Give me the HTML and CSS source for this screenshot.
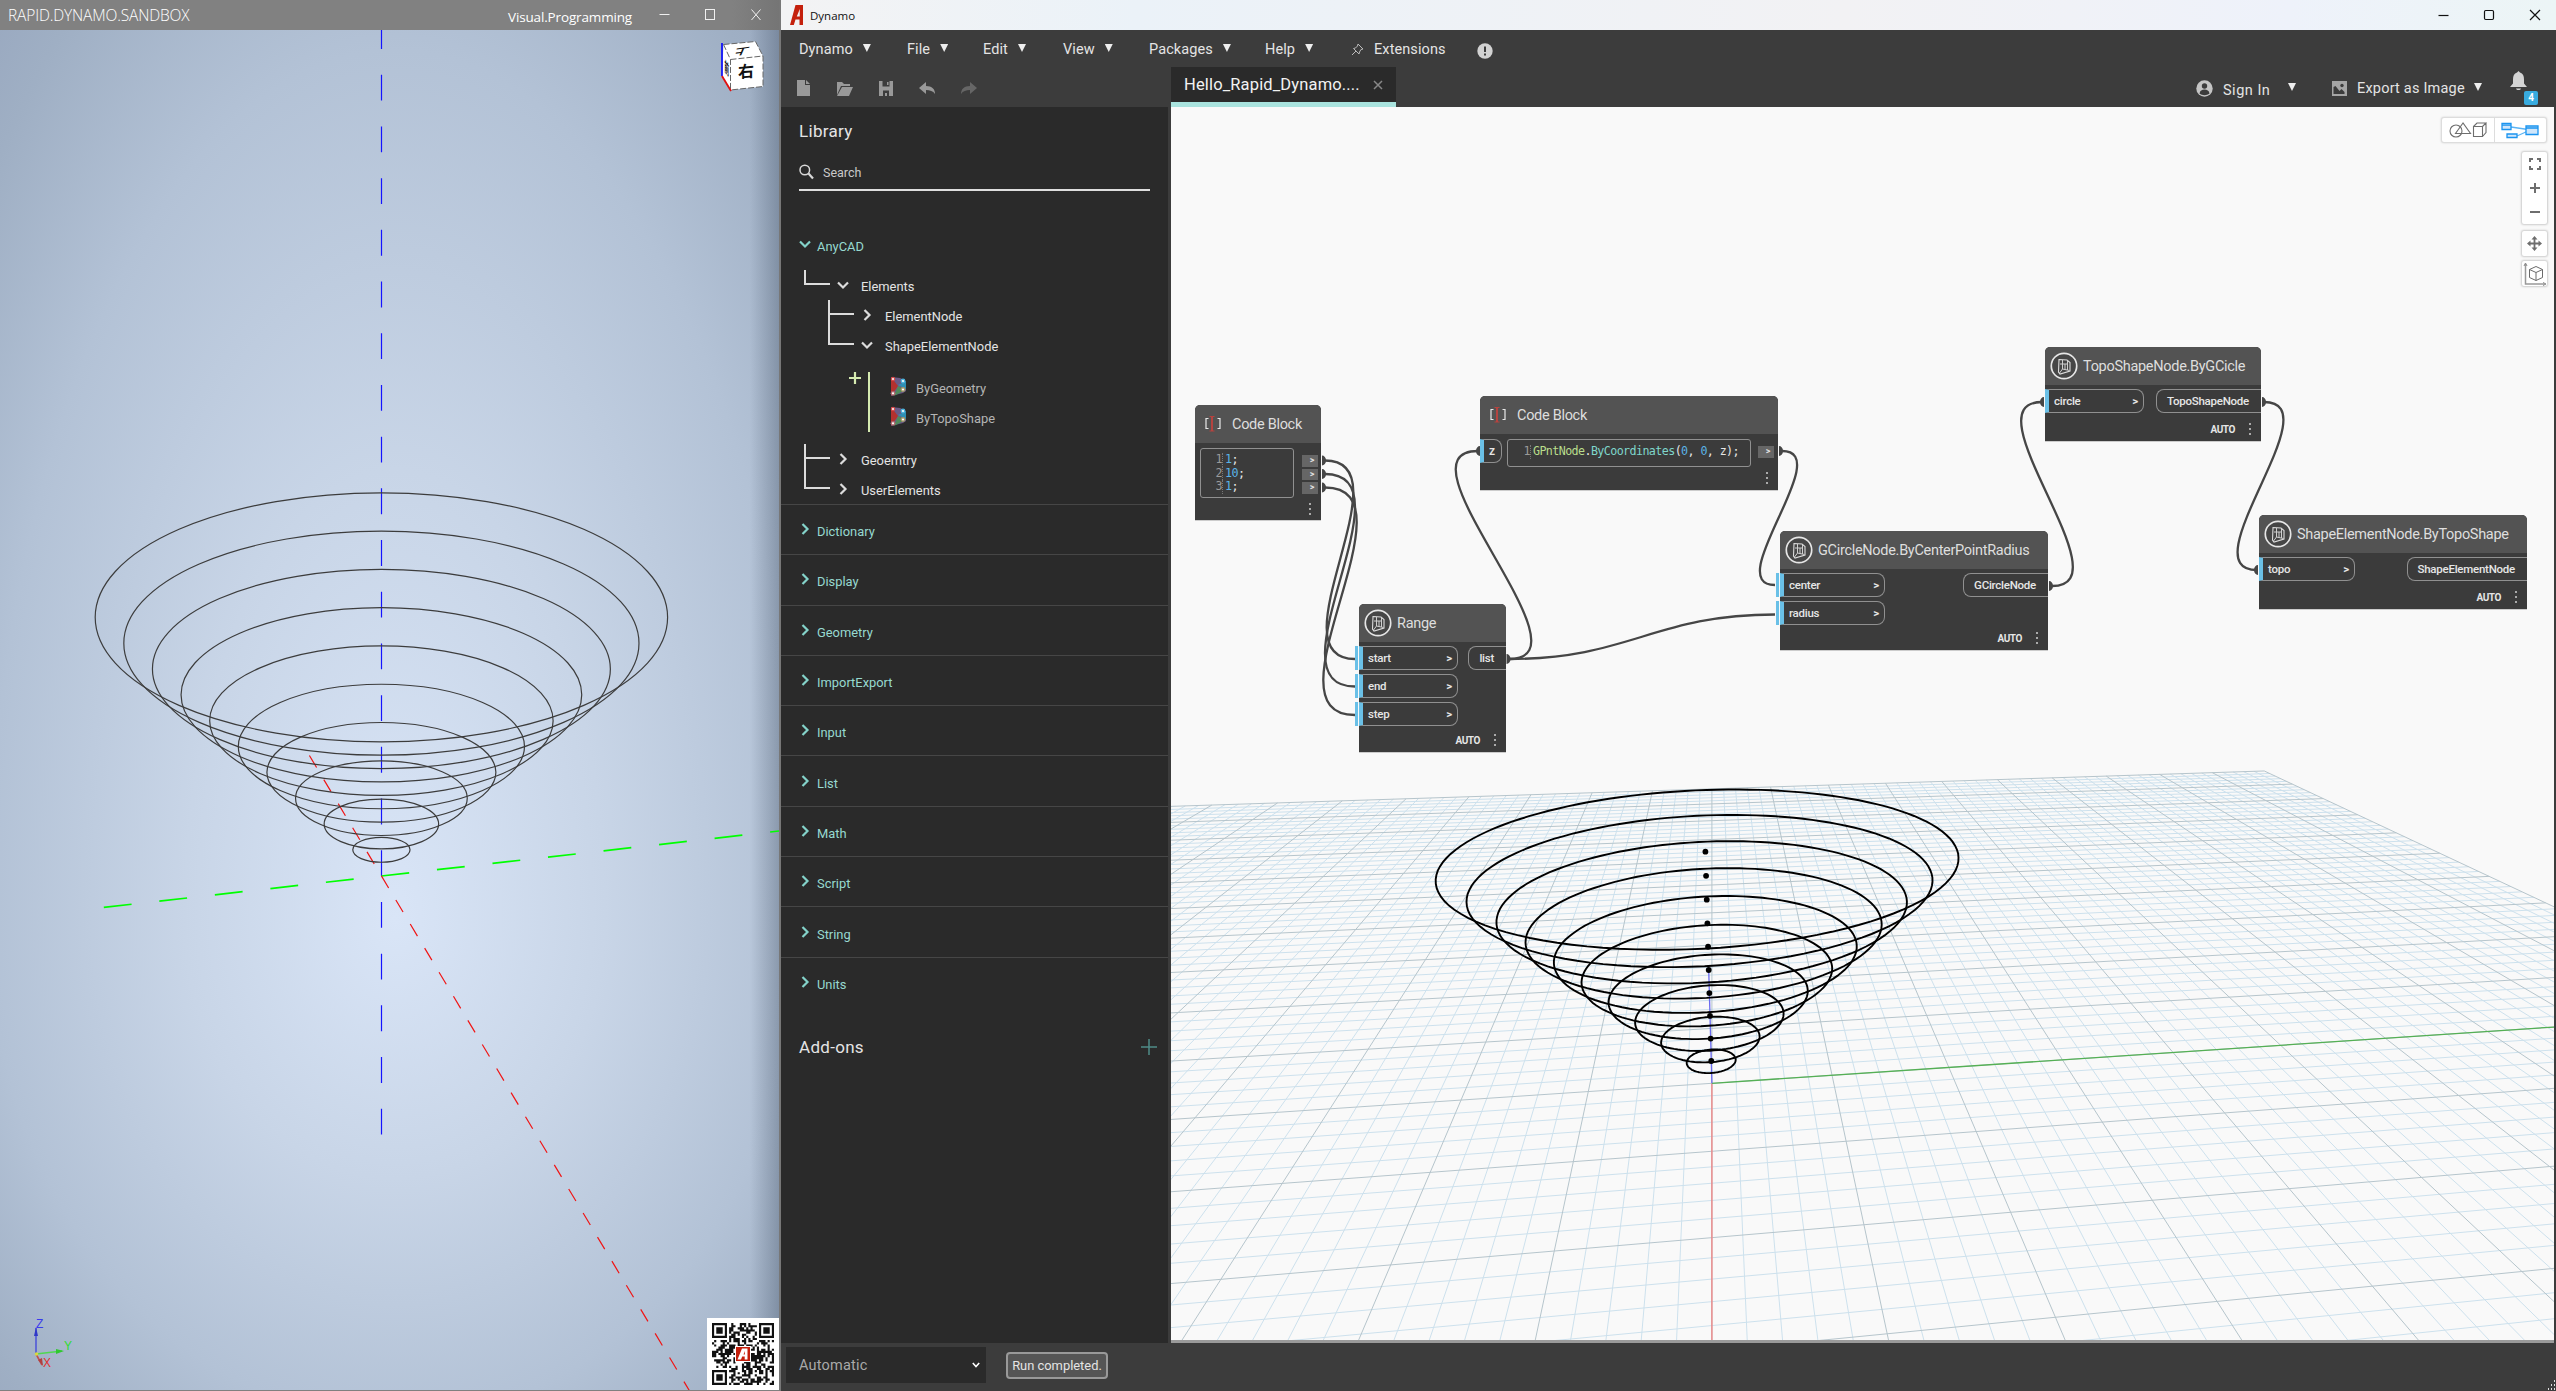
FILE: index.html
```html
<!DOCTYPE html>
<html lang="en">
<head>
<meta charset="utf-8">
<title>Dynamo</title>
<link rel="stylesheet" href="styles.css">
</head>
<body>
<svg class="defs" width="0" height="0">
  <symbol id="down" viewBox="0 0 12 12"><path d="M1 3.500l5 5 5-5" fill="none" stroke="currentColor" stroke-width="2.200"/></symbol>
  <symbol id="right" viewBox="0 0 12 12"><path d="M3.500 1l5 5-5 5" fill="none" stroke="currentColor" stroke-width="2.200"/></symbol>
  <symbol id="shape" viewBox="0 0 16 20"><path d="M1 1l9 1 6 3v10l-3 2-12 3z" fill="#6b5a86"/><path d="M1 1l7 9-7 10z" fill="#b3312f"/><path d="M16 5v8l-8-4z" fill="#2f8fb5"/><path d="M8 10l7 4-11 6z" fill="#4f8a5a"/><circle cx="3" cy="3" r="2.200" fill="#d84a4a"/><circle cx="3" cy="3" r="1" fill="#fff"/><circle cx="13" cy="5" r="2.400" fill="#4db4de"/><circle cx="13" cy="5" r="1.100" fill="#fff"/><circle cx="13" cy="13.500" r="2.400" fill="#a89a6a"/><circle cx="13" cy="13.500" r="1.100" fill="#fff"/><circle cx="3" cy="17.300" r="2.400" fill="#b06a70"/><circle cx="3" cy="17.300" r="1.100" fill="#fff"/></symbol>
  <symbol id="nodeicon" viewBox="0 0 28 28"><circle cx="14" cy="14" r="12.700" fill="#464646" stroke="#e6e6e6" stroke-width="1.700"/><path d="M9 7.500l8 .500 3 2.500v8.500l-10 3-1.500-2z" fill="none" stroke="#dcdcdc" stroke-width="1.100"/><path d="M10 12h7M12.500 8v9l-3 4M12.500 17l7 1.500M15 12v6M17.500 9v9" fill="none" stroke="#cfcfcf" stroke-width="1"/></symbol>
  <symbol id="brackets" viewBox="0 0 16 16"><path d="M3.500 2.500H1v10h2.500M12.500 2.500H15v10h-2.500" fill="none" stroke="#e8e8e8" stroke-width="1.200"/><path d="M4.500.500h5M4.500 15h5" stroke="#b5433f"/><path d="M7 .500V15" stroke="#b5433f" stroke-width="2"/></symbol>
</svg>

<main class="desktop">
<section class="sandbox">
  <header class="sandbox-bar">
    <span class="sandbox-title">RAPID.DYNAMO.SANDBOX</span>
    <span class="sandbox-mode">Visual.Programming</span>
    <svg width="104" height="20" viewBox="0 0 104 20" fill="none" stroke="#f0f0f0"><path d="M.500 9.500h10"/><rect x="46.500" y="4.500" width="9" height="10"/><path d="M92.500 4.500l9 10.500M101.500 4.500l-9 10.500"/></svg>
  </header>
  <div class="sandbox-view">
    <svg class="scene" viewBox="0 30 779 1360" width="779" height="1360">
      <path d="M381.500 1134.600V30" stroke="#1414ff" stroke-width="1.200" stroke-dasharray="25.850 25.850"/>
      <path d="M103.800 907.400L779 831" stroke="#0f0" stroke-width="1.700" stroke-dasharray="27.940 27.940"/>
      <path d="M309.400 755.500L693 1396.700" stroke="#f01414" stroke-width="1.200" stroke-dasharray="14.030 14.030"/>
      <g id="cone" fill="none" stroke="#3c3c3c" stroke-width="1.200"></g>
      <g>
        <path d="M723.500 44.500l32-3 7.500 14.500v30.500l-32.500 3.500-8.500-14z" fill="#fff"/>
        <path d="M723.500 44.500l32-3 7.500 14.500v30.500l-32.500 3.500M723.500 44.500l7 15v30M730.500 59.500l32.500-3.500" fill="none" stroke="#666" stroke-dasharray="6 2"/>
        <path d="M722 43v33" stroke="#00f" stroke-width="1.600"/><path d="M722 76l9 15" stroke="#e01010" stroke-width="1.800"/>
        <text class="cube" transform="translate(738 78) skewY(-5)" font-size="16">右</text>
        <text class="cube" transform="translate(750 47) rotate(172) scale(1 .6) skewX(-20)" font-size="14">上</text>
        <text class="cube" transform="translate(724.500 71) skewY(50) scale(.3 1)" font-size="15">前</text>
      </g>
      <g stroke-width="1.600" class="triad">
        <path d="M36 1354v-26" stroke="#5058d8"/><path d="M34 1336l2-9 2 9z" fill="#3038c8"/>
        <path d="M36 1354l26-3" stroke="#50d850"/><path d="M56 1349l8 2-8 3z" fill="#30c830"/>
        <path d="M36 1354l6 11" stroke="#c05050"/><path d="M38 1360l5 6-1-8z" fill="#b04040"/>
        <circle cx="36.500" cy="1354" r="1.800" fill="#d8d840"/>
        <text x="36" y="1328" fill="#3a3aee">Z</text><text x="64" y="1350" fill="#2fdc2f">Y</text><text x="43" y="1367" fill="#e03030">X</text>
      </g>
      <rect x="707" y="1318" width="72" height="72" fill="#fff"/>
      <g id="qr" fill="#111"></g>
      <rect x="735" y="1346" width="16" height="16" fill="#fff"/><rect x="736" y="1347" width="14" height="14" fill="#c41f0c"/>
      <path d="M737.500 1359.500l4.500-11h5.500v11h-2.800v-3h-2.500l-1.200 3z" fill="#fff"/><path d="M743.500 1354.500l1.400-3.500v3.500z" fill="#c41f0c"/>
    </svg>
  </div>
</section>

<section class="dynamo">
  <header class="titlebar">
    <svg width="14" height="20" viewBox="0 0 14 20"><path d="M0 20L5.500 0H13v20H9.500v-5.500H5.500L3.800 20zM6.800 11.500h3V4z" fill="#c4200c"/></svg>
    <span>Dynamo</span>
    <svg class="winbtns" width="104" height="14" viewBox="0 0 104 14" fill="none" stroke="#111" stroke-width="1.200"><path d="M.500 7.500h10"/><rect x="46.500" y="2.500" width="9" height="9" rx="1.200"/><path d="M92 2l10 10M102 2l-10 10"/></svg>
  </header>
  <nav class="menubar">
    <div class="menu m1">Dynamo<i></i></div><div class="menu m2">File<i></i></div><div class="menu m3">Edit<i></i></div><div class="menu m4">View<i></i></div><div class="menu m5">Packages<i></i></div><div class="menu m6">Help<i></i></div>
    <div class="menu ext"><svg width="13" height="13" viewBox="0 0 13 13" fill="none" stroke="#bbb"><path d="M7 1l5 5-2 .5L8.500 9 8 11 2.500 5.500l2-.5L6.500 3zM5 8l-4 4"/></svg>Extensions</div>
    <svg class="info" width="16" height="16" viewBox="0 0 16 16"><circle cx="8" cy="8" r="7.700" fill="#d2d2d2"/><path d="M8 3.500v5.500M8 10.500v2" stroke="#3c3c3c" stroke-width="2"/></svg>
  </nav>
  <div class="toolbar">
    <div class="tools">
      <svg width="181" height="18" viewBox="0 0 181 18" fill="#999"><path d="M0 1h8v5h5v11H0zM9 1l4 4H9z"/><path d="M40 3h5l2 2h6v2h-9l-4 9zM45 8h11l-4 9H40z"/><path d="M82 2h14v15H82z"/><path d="M85.500 2h7v5.500h-7zM86 17v-5.500h6V17h-2v-3h-2v3z" fill="#3c3c3c"/><path d="M90 3h1.500v3H90z"/><path d="M122 9l7-6v4c6 0 9 3 9 8-2-3-5-4-9-4v4z"/><path d="M180 9l-7-6v4c-6 0-9 3-9 8 2-3 5-4 9-4v4z" fill="#666"/></svg>
    </div>
    <div class="tab"><span>Hello_Rapid_Dynamo....</span><svg width="10" height="10" viewBox="0 0 10 10"><path d="M1 1l8 8M9 1L1 9" stroke="#888" stroke-width="1.500"/></svg></div>
    <div class="account">
      <svg width="17" height="17" viewBox="0 0 17 17"><circle cx="8.500" cy="8.500" r="8.200" fill="#c4c4c4"/><circle cx="8.500" cy="6" r="2.700" fill="#3c3c3c"/><path d="M3.500 13.500c.5-3 2.500-4 5-4s4.500 1 5 4c-3 2.300-7 2.300-10 0z" fill="#3c3c3c"/></svg>
      <span class="signin">Sign In</span><i></i>
      <svg class="pic" width="15" height="15" viewBox="0 0 15 15"><path d="M0 0h15v15H0z" fill="#a5a5a5"/><path d="M1.500 13V6l2-1 4 5 2-2 3 3v2z" fill="#3c3c3c"/><circle cx="10" cy="4.500" r="1.700" fill="#3c3c3c"/></svg>
      <span class="export">Export as Image</span><i></i>
      <div class="bell"><svg width="17" height="20" viewBox="0 0 17 20" fill="#d4d4d4"><path d="M8.500 0l1.500 1.500c3 1 4 3.500 4 7v4l3 3.500H0l3-3.500v-4c0-3.500 1-6 4-7zM6 17.500h5c-.5 2-4.500 2-5 0z"/></svg><b>4</b></div>
    </div>
  </div>

  <div class="body">
    <aside class="library">
      <h1>Library</h1>
      <div class="search"><svg width="15" height="16" viewBox="0 0 15 16" fill="none" stroke="#d8d8d8"><circle cx="5.800" cy="6" r="4.800" stroke-width="1.500"/><path d="M9.500 9.500l4.500 5" stroke-width="2.200"/></svg><span>Search</span></div>
      <div class="cat open"><svg><use href="#down"/></svg><span>AnyCAD</span></div>
      <div class="tree">
        <svg class="lines" width="70" height="236" viewBox="0 0 70 236" fill="none" stroke="#dcdcdc" stroke-width="2"><path d="M6 4v14h25M30 34v44h25M30 48h25M6 178v44h25M6 192h25"/><path d="M70 106v60" stroke="#d5eab0"/></svg>
        <div class="t l1"><svg><use href="#down"/></svg><span>Elements</span></div>
        <div class="t l2"><svg><use href="#right"/></svg><span>ElementNode</span></div>
        <div class="t l2"><svg><use href="#down"/></svg><span>ShapeElementNode</span></div>
        <div class="create"><svg class="plus" width="12" height="12" viewBox="0 0 12 12"><path d="M6 0v12M0 6h12" stroke="#d5eab0" stroke-width="2.200"/></svg>
          <div class="leaves"><div class="leaf"><svg><use href="#shape"/></svg><span>ByGeometry</span></div><div class="leaf"><svg><use href="#shape"/></svg><span>ByTopoShape</span></div></div></div>
        <div class="t l1"><svg><use href="#right"/></svg><span>Geoemtry</span></div>
        <div class="t l1"><svg><use href="#right"/></svg><span>UserElements</span></div>
      </div>
      <div class="cat"><svg><use href="#right"/></svg><span>Dictionary</span></div>
      <div class="cat"><svg><use href="#right"/></svg><span>Display</span></div>
      <div class="cat"><svg><use href="#right"/></svg><span>Geometry</span></div>
      <div class="cat"><svg><use href="#right"/></svg><span>ImportExport</span></div>
      <div class="cat"><svg><use href="#right"/></svg><span>Input</span></div>
      <div class="cat"><svg><use href="#right"/></svg><span>List</span></div>
      <div class="cat"><svg><use href="#right"/></svg><span>Math</span></div>
      <div class="cat"><svg><use href="#right"/></svg><span>Script</span></div>
      <div class="cat"><svg><use href="#right"/></svg><span>String</span></div>
      <div class="cat"><svg><use href="#right"/></svg><span>Units</span></div>
      <div class="addons"><span>Add-ons</span><svg width="18" height="18" viewBox="0 0 18 18"><path d="M9 1v16M1 9h16" stroke="#4f8c88" stroke-width="1.500"/></svg></div>
    </aside>

    <div class="workspace">
      <svg class="scene" viewBox="1171 107 1383 1233" width="1383" height="1233">
        <g id="grid"></g>
        <g id="axes" fill="none" stroke-width="1.300"></g>
        <g id="rings" fill="none" stroke="#000" stroke-width="1.900"></g>
        <g id="pts" fill="#000"></g>
        <g fill="none" stroke="#464646" stroke-width="2.300">
          <path d="M1325 460.500C1409 460.500 1271 659 1355 659"/>
          <path d="M1325 474C1415 474 1265 686.500 1355 686.500"/>
          <path d="M1325 487.500C1421 487.500 1259 715 1355 715"/>
          <path d="M1509 659C1597 659 1390 451 1478 451"/>
          <path d="M1509 659C1630 659 1654 614.500 1775 614.500"/>
          <path d="M1782 451C1837 451 1720 585 1775 585"/>
          <path d="M2052 586C2128 586 1966 402 2042 402"/>
          <path d="M2264 402C2334 402 2187 570 2257 570"/>
        </g>
        <g fill="#464646">
          <path d="M1322 455.500a4 5 0 0 1 0 10zM1322 469a4 5 0 0 1 0 10zM1322 482.500a4 5 0 0 1 0 10zM1506.500 654a4 5 0 0 1 0 10zM1779 446a4 5 0 0 1 0 10zM2049 581a4 5 0 0 1 0 10zM2262 397a4 5 0 0 1 0 10zM1480 446a4 5 0 0 0 0 10zM2044 397a4 5 0 0 0 0 10zM2258 565a4 5 0 0 0 0 10z"/>
        </g>
      </svg>

      <article class="node n-cb1">
        <header><svg class="br"><use href="#brackets"/></svg><span>Code Block</span></header>
        <div class="code"><p><em>1</em><u>1</u>;</p><p><em>2</em><u>10</u>;</p><p><em>3</em><u>1</u>;</p></div>
        <div class="outs"><b>&gt;</b><b>&gt;</b><b>&gt;</b></div>
        <footer><s></s></footer>
      </article>
      <article class="node n-cb2">
        <header><svg class="br"><use href="#brackets"/></svg><span>Code Block</span></header>
        <div class="in zport">z</div>
        <div class="code"><p><em>1</em><q>GPntNode</q>.<a>ByCoordinates</a>(<u>0</u>, <u>0</u>, z);</p></div>
        <div class="outs"><b>&gt;</b></div>
        <footer><s></s></footer>
      </article>
      <article class="node n-range">
        <header><svg class="ni"><use href="#nodeicon"/></svg><span>Range</span></header>
        <div class="ports"><div class="ins"><div class="in dbl">start<b>&gt;</b></div><div class="in dbl">end<b>&gt;</b></div><div class="in dbl">step<b>&gt;</b></div></div><div class="out">list</div></div>
        <footer><span>AUTO</span><s></s></footer>
      </article>
      <article class="node n-gc">
        <header><svg class="ni"><use href="#nodeicon"/></svg><span>GCircleNode.ByCenterPointRadius</span></header>
        <div class="ports"><div class="ins"><div class="in dbl">center<b>&gt;</b></div><div class="in dbl">radius<b>&gt;</b></div></div><div class="out">GCircleNode</div></div>
        <footer><span>AUTO</span><s></s></footer>
      </article>
      <article class="node n-ts">
        <header><svg class="ni"><use href="#nodeicon"/></svg><span>TopoShapeNode.ByGCicle</span></header>
        <div class="ports"><div class="ins"><div class="in">circle<b>&gt;</b></div></div><div class="out">TopoShapeNode</div></div>
        <footer><span>AUTO</span><s></s></footer>
      </article>
      <article class="node n-se">
        <header><svg class="ni"><use href="#nodeicon"/></svg><span>ShapeElementNode.ByTopoShape</span></header>
        <div class="ports"><div class="ins"><div class="in">topo<b>&gt;</b></div></div><div class="out">ShapeElementNode</div></div>
        <footer><span>AUTO</span><s></s></footer>
      </article>

      <div class="controls">
        <div class="toggle">
          <div><svg width="38" height="18" viewBox="0 0 38 18" fill="none" stroke="#6e6e6e" stroke-width="1.100"><circle cx="7" cy="10" r="6"/><path d="M14 2L6.500 12.500H21.500zM24.500 5.500h9v10h-9zM24.500 5.500L28 2h9l-3.500 3.500M37 2v9.500l-3.500 4"/></svg></div>
          <div><svg width="38" height="18" viewBox="0 0 38 18" fill="#cfe6fb" stroke="#1a94f0" stroke-width="1.300"><path d="M10 6l17 2.500M16 15l11-5" fill="none" stroke="#5ab4f5"/><path d="M1 2.500h9v6H1zM25 5h12v8.500H25zM6 13h10v3.500H6z"/><path d="M1 4.200h9M25 7h12"/></svg></div>
        </div>
        <div class="box zoom">
          <svg width="12" height="12" viewBox="0 0 12 12"><path d="M1 4V1h3M8 1h3v3M11 8v3H8M4 11H1V8" fill="none" stroke="#6e6e6e" stroke-width="2"/></svg>
          <svg width="12" height="12" viewBox="0 0 12 12"><path d="M6 1v10M1 6h10" stroke="#6e6e6e" stroke-width="2"/></svg>
          <svg width="12" height="12" viewBox="0 0 12 12"><path d="M1 6h10" stroke="#6e6e6e" stroke-width="2"/></svg>
        </div>
        <div class="box pan"><svg width="15" height="15" viewBox="0 0 15 15"><path d="M7.500 2v11M2 7.500h11" stroke="#6e6e6e" stroke-width="1.800"/><path d="M7.500 0l3 3.500h-6zM7.500 15l3-3.500h-6zM0 7.500l3.500-3v6zM15 7.500l-3.500-3v6z" fill="#6e6e6e"/></svg></div>
        <div class="box orbit"><svg width="23" height="24" viewBox="0 0 23 24" fill="none" stroke="#6a6a6a"><path d="M2.500 2v20h19" stroke="#999" stroke-width="1.500"/><path d="M1 4l1.500-3L4 4M20 20.500l3 1.500-3 1.500" stroke="#888"/><path d="M13 4.500l6.500 3v8L13 18.500 6.500 15.500v-8zM6.500 7.500l6.500 3 6.500-3M13 10.500v8"/></svg></div>
      </div>
    </div>
  </div>

  <footer class="status">
    <div class="runmode">Automatic<svg width="8" height="8" viewBox="0 0 8 8"><path d="M.800 2l3.200 3.500L7.200 2" fill="none" stroke="#fff" stroke-width="1.600"/></svg></div>
    <div class="runstate">Run completed.</div>
    <svg class="grip" width="10" height="10" viewBox="0 0 10 10" fill="#ddd"><path d="M8 0h1v2H8zM5 4h1v2H5zM8 4h1v2H8zM2 8h1v2H2zM5 8h1v2H5zM8 8h1v2H8z"/></svg>
  </footer>
</section>
</main>
<script src="scene.js"></script>
</body>
</html>
```
FILE: styles.css
```css
* { box-sizing: border-box; }
body { margin: 0; background: #3c3c3c; font-family: Roboto, "Liberation Sans", sans-serif; color: #e4e4e4; overflow: hidden; }
i, em, u, q, s, a { font-style: normal; text-decoration: none; }
q::before, q::after { content: none; }
.defs { position: absolute; }
.desktop { display: flex; width: 2556px; height: 1391px; overflow: hidden; }
.scene { display: block; }

/* viewer window */
.sandbox { width: 781px; display: flex; flex-direction: column; border-right: 2px solid #777; border-bottom: 1px solid #808080; }
.sandbox-bar { height: 30px; background: linear-gradient(90deg, #818181 94%, #757575); display: flex; align-items: center; color: #fff; padding-left: 8px; font-family: "Open Sans", sans-serif; }
.sandbox-title { font-size: 15.500px; font-weight: 300; width: 500px; letter-spacing: -.15px; }
.sandbox-mode { font-size: 13.500px; width: 151px; padding-top: 4px; letter-spacing: -.15px; }
.sandbox-view { flex: 1; background:
  linear-gradient(90deg, transparent 750px, rgba(60,75,95,.35) 779px),
  radial-gradient(ellipse 700px 1500px at 395px 890px, #d9e5f7 0, #c8d5e7 30%, #b3c2d6 58%, #9fafc4 76%, #94a3bc 90%) top / 100% 890px no-repeat,
  radial-gradient(ellipse 700px 860px at 395px 0, #d9e5f7 0, #c8d5e7 30%, #b3c2d6 58%, #9fafc4 76%, #94a3bc 90%) bottom / 100% 470px no-repeat; }
.cube { font-family: "Noto Sans CJK SC", sans-serif; font-weight: 700; fill: #111; }
.triad { font-family: "Liberation Sans", sans-serif; }
.triad text { stroke: none; font-size: 12px; }

/* main window */
.dynamo { flex: 1; display: flex; flex-direction: column; min-width: 0; background: #3c3c3c; }
.titlebar { height: 30px; display: flex; align-items: center; padding: 0 14px 0 9px; gap: 6px; background: linear-gradient(90deg, #f3f3f4, #ebf2f8 20%, #f2f2f4 60%, #eef2fa 85%, #ecf5f6); color: #111; font: 11.500px "Open Sans", sans-serif; }
.winbtns { margin-left: auto; }
.menubar { height: 37px; display: flex; align-items: center; padding: 2px 0 0 18px; font-size: 14.500px; letter-spacing: .1px; }
.menu { display: flex; align-items: center; gap: 10px; white-space: nowrap; }
.m1 { width: 108px; } .m2 { width: 76px; } .m3 { width: 80px; } .m4 { width: 86px; } .m5 { width: 116px; } .m6 { width: 86px; }
.ext { width: 126px; }
.dynamo i { width: 8px; height: 8px; background: #eee; clip-path: polygon(0 0, 100% 0, 50% 100%); flex: none; margin-top: -3px; }
.info { margin-top: 2px; }
.toolbar { height: 40px; display: flex; }
.tools { width: 390px; padding: 12px 0 0 16px; }
.tab { width: 225px; background: #2a2a2a; border-bottom: 5px solid #a9e3de; display: flex; align-items: center; justify-content: space-between; padding: 0 13px; font-size: 16.500px; letter-spacing: .15px; color: #f2f2f2; }
.account { margin-left: auto; display: flex; align-items: center; padding: 3px 18px 0 0; font-size: 14.500px; letter-spacing: .2px; }
.signin { margin: 3px 0 0 10px; width: 65px; letter-spacing: .5px; }
.pic { margin-left: 36px; }
.export { margin-left: 10px; width: 117px; }
.bell { position: relative; width: 28px; height: 33px; margin: -3px 0 0 28px; }
.bell svg { display: block; }
.bell b { position: absolute; right: 0; bottom: -1px; width: 14px; height: 14px; border-radius: 2px; background: #38abdf; color: #fff; font-size: 10px; line-height: 14px; text-align: center; letter-spacing: 0; }
.body { display: flex; height: 1236px; }

/* library */
.library { width: 387px; background: #2a2a2a; font-size: 12.900px; }
.library h1 { margin: 0; padding: 13px 0 0 18px; font-size: 17px; line-height: 22px; font-weight: 400; letter-spacing: .3px; }
.search { margin: 11px 0 0 18px; width: 351px; height: 38px; border-bottom: 2px solid #dedede; display: flex; align-items: center; gap: 9px; color: #c9c9c9; font-size: 12.500px; padding-top: 2px; }
.cat { height: 50.300px; border-top: 1px solid #464646; display: flex; align-items: center; gap: 6px; padding: 4px 0 0 18px; color: #97d9d0; }
.cat svg, .t svg { width: 12px; height: 12px; color: #84d3ca; margin-top: -5px; flex: none; }
.cat.open { border: 0; height: 42px; margin-top: 33px; align-items: flex-start; padding-top: 15px; line-height: 16px; }
.cat.open svg { margin-top: -1px; }
.tree { position: relative; height: 238px; padding-top: 5px; }
.lines { position: absolute; left: 18px; top: 0; overflow: visible; }
.t { height: 30px; display: flex; align-items: center; gap: 12px; }
.t svg { color: #dcdcdc; margin-top: -3px; }
.l1 { padding-left: 56px; } .l2 { padding-left: 80px; }
.create { height: 84px; display: flex; padding-left: 68px; }
.plus { margin-top: 11px; }
.leaves { padding: 12px 0 0 29px; }
.leaf { height: 30px; display: flex; align-items: center; gap: 10px; color: #b4b4b4; }
.leaf svg { width: 16px; height: 20px; margin-top: -5px; }
.addons { display: flex; justify-content: space-between; align-items: center; padding: 30px 10px 0 18px; font-size: 17px; letter-spacing: .3px; }

/* workspace */
.workspace { position: relative; margin-left: 3px; width: 1383px; height: 1236px; background: #f9f9f9; border-bottom: 3px solid #9a9a9a; overflow: hidden; }
.node { position: absolute; background: #3b3b3b; border-radius: 5px 5px 0 0; display: grid; grid-template-rows: 38px 1fr auto; box-shadow: 0 1px 0 #ccc; color: #e6e6e6; }
.node header { grid-column: 1 / -1; background: #535353; border-radius: 5px 5px 0 0; display: flex; align-items: center; padding-left: 5px; gap: 5px; font-size: 14.500px; letter-spacing: -.3px; color: #dedede; white-space: nowrap; }
.node footer { grid-column: 1 / -1; height: 23px; display: flex; justify-content: flex-end; gap: 14px; padding-right: 10px; font-size: 10px; font-weight: 700; line-height: 23px; letter-spacing: -.4px; }
.node s { width: 2px; height: 12px; margin-top: 5px; background: repeating-linear-gradient(#aaa 0 2px, transparent 2px 5px); }
.ni { width: 28px; height: 28px; }
.br { width: 16px; height: 16px; margin: 0 6px 0 5px; }
.n-cb1 { left: 24px; top: 298px; width: 126px; height: 115px; grid-template-columns: 99px 1fr; }
.n-cb2 { left: 309px; top: 289px; width: 298px; height: 94px; grid-template-columns: 22px 1fr 25px; }
.n-range { left: 188px; top: 497px; width: 147px; height: 148px; }
.n-gc { left: 609px; top: 424px; width: 268px; height: 119px; }
.n-ts { left: 874px; top: 240px; width: 216px; height: 94px; }
.n-se { left: 1088px; top: 408px; width: 268px; height: 94px; }
.code { border: 1px solid #909090; border-radius: 3px; font: 11.700px/13.500px "DejaVu Sans Mono", monospace; letter-spacing: -.6px; margin: 5px 0 0 5px; white-space: pre; }
.code p { margin: 0; }
.code em { display: inline-block; width: 22px; margin-right: 2px; text-align: right; color: #9a9a9a; border-right: 1px dotted #777; }
.code u { color: #5ab4e8; } .code q { color: #b9dd8c; } .code a { color: #7fd6cb; }
.n-cb1 .code { height: 50px; padding-top: 4px; }
.n-cb2 .code { height: 28px; padding: 5px 0 0; margin-right: 2px; }
.n-cb2 .code em { width: 23px; }
.outs { display: flex; flex-direction: column; gap: 2px; padding: 12px 0 0 8px; }
.n-cb2 .outs { padding-left: 5px; }
.outs b { width: 16px; height: 11.500px; background: #666; font-size: 9px; line-height: 11px; text-align: center; padding-left: 4px; }
.ports { display: flex; justify-content: space-between; align-items: flex-start; padding-top: 4px; font-size: 11.500px; font-weight: 500; letter-spacing: -.25px; }
.ins { display: flex; flex-direction: column; gap: 4px; }
.in { position: relative; width: 99px; height: 24px; border: 1px solid #909090; border-left: 4px solid #6ac0e7; border-radius: 0 8px 8px 0; display: flex; justify-content: space-between; align-items: center; padding: 0 5px; line-height: 22px; }
.n-gc .in { width: 105px; }
.n-se .in { width: 96px; }
.dbl::before { content: ""; position: absolute; left: -8px; top: -1px; width: 3px; height: 24px; background: #6ac0e7; }
.zport { width: 22px; margin-top: 5px; padding-left: 5px; font-size: 12px; font-weight: 500; }
.out { height: 24px; border: 1px solid #909090; border-right: 0; border-radius: 8px 0 0 8px; padding: 0 12px 0 10px; line-height: 22px; }

.controls { position: absolute; right: 7px; top: 10px; display: flex; flex-direction: column; align-items: flex-end; }
.toggle { display: flex; width: 106px; height: 26px; background: #fff; border: 1px solid #ddd; border-radius: 3px; box-shadow: 0 0 2px #ccc; }
.toggle div { flex: 1; display: flex; align-items: center; justify-content: center; }
.toggle div + div { border-left: 1px solid #ddd; }
.box { width: 25px; background: #fff; border-radius: 2px; box-shadow: 0 0 2px 1px #ccc; display: flex; flex-direction: column; align-items: center; justify-content: center; }
.zoom { height: 72px; margin-top: 9px; gap: 12px; }
.pan { height: 25px; margin-top: 7px; }
.orbit { height: 25px; margin-top: 5px; }

.status { height: 48px; display: flex; align-items: center; padding-left: 5px; position: relative; }
.runmode { width: 200px; height: 36px; margin-top: -4px; background: #2a2a2a; color: #a9a9a9; font-size: 14.500px; letter-spacing: .2px; display: flex; align-items: center; justify-content: space-between; padding: 0 6px 0 13px; }
.runstate { margin: -4px 0 0 20px; width: 102px; height: 27px; border: 2px solid #999; border-radius: 4px; background: #555; font-size: 12.900px; line-height: 23px; text-align: center; white-space: nowrap; }
.grip { position: absolute; right: 0; bottom: 1px; }
```
FILE: scene.js
```javascript
const NS = 'http://www.w3.org/2000/svg';
const byId = id => document.getElementById(id);
function add(parent, tag, attrs) {
  const el = document.createElementNS(NS, tag);
  for (const k in attrs) el.setAttribute(k, attrs[k]);
  parent.appendChild(el);
  return el;
}

// orthographic view: ten stacked circles
for (let k = 1; k <= 10; k++) {
  add(byId('cone'), 'ellipse', { cx: 381.4, cy: 849.8 - (k - 1) * 25.83, rx: 28.62 * k, ry: 12.45 * k });
}

// perspective camera of the background preview
const depth = (x, y) => 0.0017504 - 3.7232e-5 * x + 4.99e-6 * y;
function project(x, y, z) {
  const g = depth(x, y), w = g - 7.405e-6 * z;
  return [(1711.9 * g + 0.04266 * y - 0.013766 * z) / w, (512 * g + 1 - 0.046845 * z) / w];
}
const line = (a, b) => 'M' + a.map(v => v.toFixed(2)) + 'L' + b.map(v => v.toFixed(2));
const near = y => Math.min(50, (0.0017504 + 4.99e-6 * y - 0.0008) / 3.7232e-5);
let minor = '', major = '';
for (let i = -50; i <= 50; i++) {
  const along = line(project(-50, i, 0), project(near(i), i, 0));
  let across = '';
  if (depth(i, -50) > 0.0004) across = line(project(i, -50, 0), project(i, 50, 0));
  if (i % 5) minor += along + across; else major += along + across;
}
add(byId('grid'), 'path', { d: minor, fill: 'none', stroke: '#cde1ed', 'stroke-width': 1 });
add(byId('grid'), 'path', { d: major, fill: 'none', stroke: '#b6c5cc', 'stroke-width': 1 });
const O = project(0, 0, 0);
add(byId('axes'), 'path', { d: line(O, project(near(0), 0, 0)), stroke: '#f08080' });
add(byId('axes'), 'path', { d: line(O, project(0, 50, 0)), stroke: '#55b055' });
add(byId('axes'), 'path', { d: line(O, project(0, 0, 5)), stroke: '#6a6af0' });

for (let r = 1; r <= 10; r++) {
  const pts = [];
  for (let t = 0; t < 120; t++) {
    const a = t * Math.PI / 60;
    pts.push(project(r * Math.cos(a), r * Math.sin(a), r).map(v => v.toFixed(1)).join(','));
  }
  add(byId('rings'), 'polygon', { points: pts.join(' ') });
  const c = project(0, 0, r);
  add(byId('pts'), 'circle', { cx: c[0], cy: c[1], r: 2.9 });
}

// QR tile: finder squares plus data modules
const N = 29, m = 62 / N;
const finder = (r, c) => {
  for (const [fr, fc] of [[0, 0], [0, N - 7], [N - 7, 0]]) {
    const y = r - fr, x = c - fc;
    if (y >= -1 && y <= 7 && x >= -1 && x <= 7) {
      if (y < 0 || x < 0 || y > 6 || x > 6) return 0;
      const d = Math.max(Math.abs(y - 3), Math.abs(x - 3));
      return d === 2 ? 0 : 1;
    }
  }
  return -1;
};
let seed = 77, d = '';
for (let r = 0; r < N; r++) for (let c = 0; c < N; c++) {
  seed = (seed * 1103515245 + 12345) % 2147483648;
  const f = finder(r, c);
  if (f === 1 || (f === -1 && (seed >> 16) & 1)) d += `M${(712 + c * m).toFixed(2)} ${(1323 + r * m).toFixed(2)}h${m.toFixed(2)}v${m.toFixed(2)}h-${m.toFixed(2)}z`;
}
add(byId('qr'), 'path', { d });
```
